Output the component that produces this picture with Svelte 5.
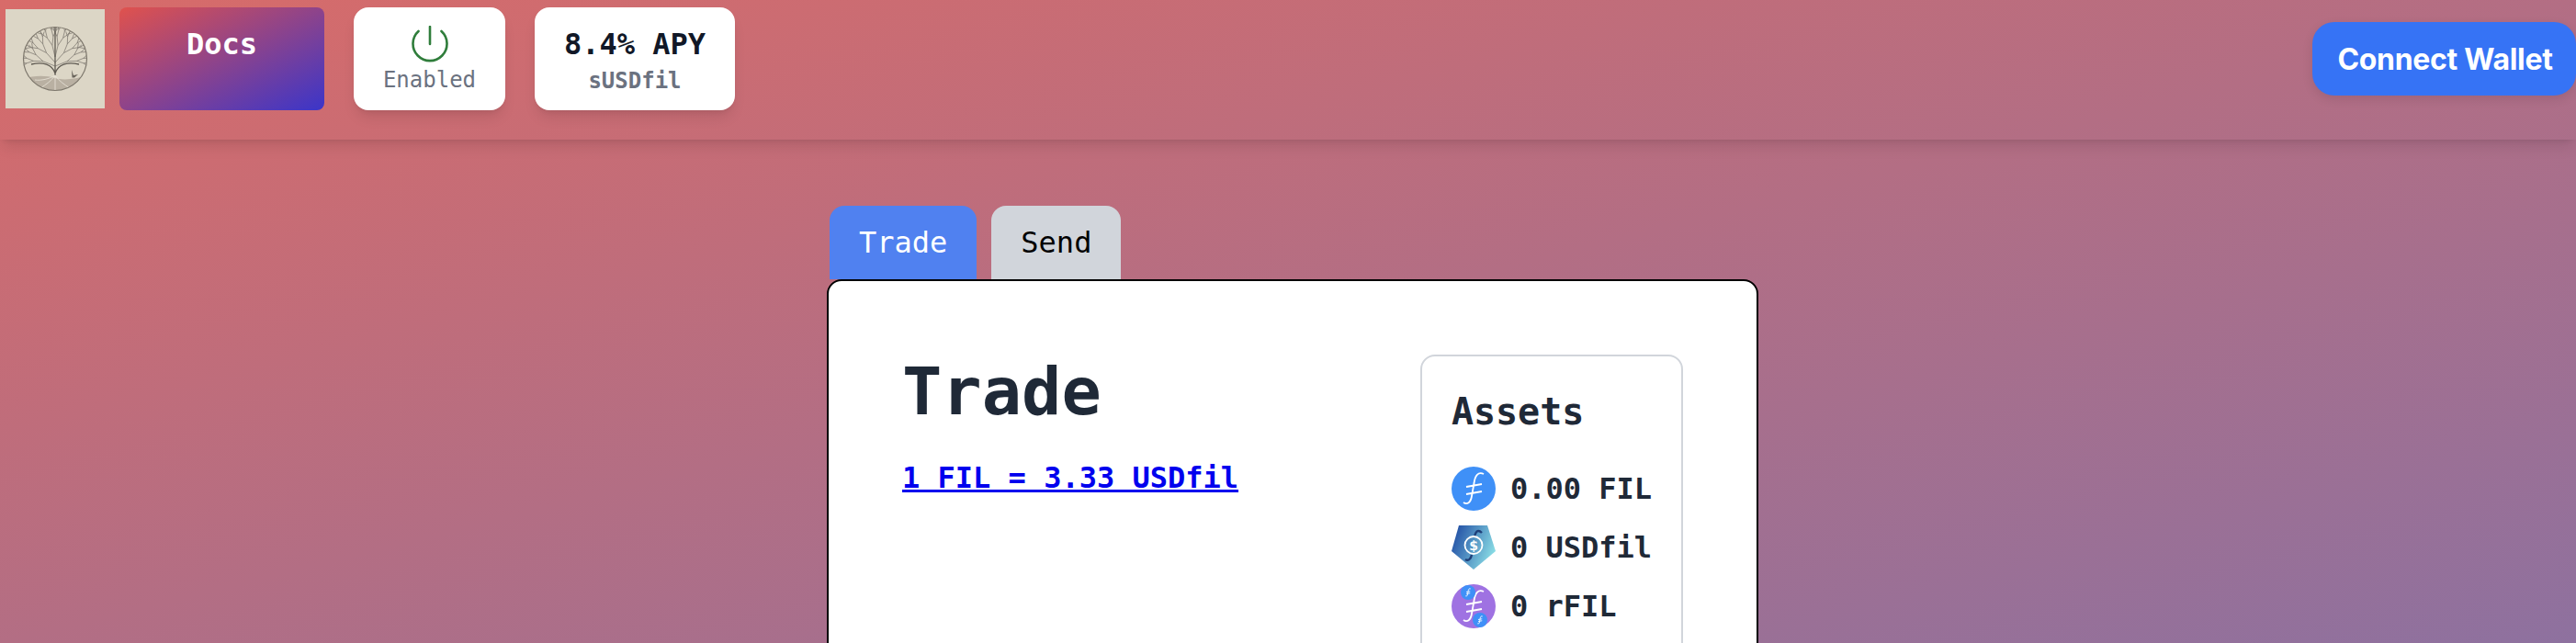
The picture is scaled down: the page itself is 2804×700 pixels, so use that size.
<script>
	const assets = [
		{ id: 'fil', amount: '0.00 FIL' },
		{ id: 'usd', amount: '0 USDfil' },
		{ id: 'rfil', amount: '0 rFIL' }
	];

	// the filecoin "f" with its two crossing bars, in a 48 box
	const filGlyph = 'M35 8C29 5 25.5 10 24.5 18L22 32C21 39 17 42 13 39M16 22L33 19M16 30L33 27';

	// tree branches for the logo: x, y, angle, length, depth
	function branches(x, y, a, len, depth) {
		const rad = (a * Math.PI) / 180;
		const nx = x + Math.sin(rad) * len;
		const ny = y - Math.cos(rad) * len;
		let d = `M${x.toFixed(1)} ${y.toFixed(1)}L${nx.toFixed(1)} ${ny.toFixed(1)}`;
		if (depth > 0) {
			d += branches(nx, ny, a - 20, len * 0.75, depth - 1);
			d += branches(nx, ny, a + 20, len * 0.75, depth - 1);
		}
		return d;
	}
	const forks = [
		[54, 52, -14, 13],
		[54, 52, 14, 13],
		[54, 58, -42, 14],
		[54, 58, 42, 14],
		[54, 62, -68, 14],
		[54, 62, 68, 14]
	];
	const tree = forks.map(([x, y, a, l]) => branches(x, y, a, l, 3)).join('');
</script>

<div class="page">
	<header>
		<div class="logo">
			<svg width="108" height="108" viewBox="0 0 108 108">
				<defs>
					<clipPath id="ring"><circle cx="54" cy="54" r="34.5" /></clipPath>
				</defs>
				<g clip-path="url(#ring)">
					<path d="M20 76C30 72 44 72 54 75C64 78 76 76 90 72V92H20Z" fill="#b9b0a2" />
					<path d={tree} fill="none" stroke="#77716a" stroke-width="0.7" />
					<path d="M54 18V72M54 70C51 60 41 57 28 60M54 70C57 60 67 57 80 60" fill="none" stroke="#5f5a52" stroke-width="1.3" />
					<path d="M54 72C50 78 44 82 38 86M54 72C58 78 64 82 70 86M54 72V90M54 72C48 76 38 78 32 77" fill="none" stroke="#ebe6da" stroke-width="0.8" />
				</g>
				<path d="M72 66L74 72L79 71L75 74.5H72.5Z" fill="#6a655c" />
				<circle cx="54" cy="54" r="34.5" fill="none" stroke="#7d776c" stroke-width="1.2" />
			</svg>
		</div>
		<a class="docs" href="#docs">Docs</a>
		<div class="stat">
			<svg class="power" width="40" height="40" viewBox="0 0 40 40">
				<path d="M7.5 6A18.5 18.5 0 1 0 32.5 6M20 1V20" fill="none" stroke="#2f7d3b" stroke-width="2.6" stroke-linecap="round" />
			</svg>
			<span class="sub">Enabled</span>
		</div>
		<div class="stat apy">
			<span class="big">8.4% APY</span>
			<span class="sub bold">sUSDfil</span>
		</div>
		<button class="connect">Connect Wallet</button>
	</header>

	<main>
		<div class="tabs">
			<button class="tab active">Trade</button>
			<button class="tab">Send</button>
		</div>
		<section class="card">
			<div class="left">
				<h1>Trade</h1>
				<a class="rate" href="#rate">1 FIL = 3.33 USDfil</a>
			</div>
			<aside class="assets">
				<h2>Assets</h2>
				{#each assets as asset}
					<div class="asset">
						<svg width="48" height="48" viewBox="0 0 48 48">
							{#if asset.id === 'fil'}
								<circle cx="24" cy="24" r="24" fill="#3f90f7" />
								<path d={filGlyph} fill="none" stroke="#fff" stroke-width="1.8" />
							{:else if asset.id === 'usd'}
								<defs>
									<linearGradient id="usdg" x1="0" y1="0.2" x2="1" y2="0.6">
										<stop offset="0" stop-color="#1f4ba3" />
										<stop offset="1" stop-color="#8bdfe6" />
									</linearGradient>
								</defs>
								<path d="M8 0H39L48 28L24 48L0 28Z" fill="url(#usdg)" />
								<path d="M33 8C28 3 26 8 25 12M22 32C21 37 18 39 15 37" fill="none" stroke="#1f3f78" stroke-width="2.4" />
								<circle cx="24" cy="21.5" r="9.5" fill="none" stroke="#fff" stroke-width="1.8" />
								<text class="dollar" x="24" y="26.5" text-anchor="middle">$</text>
							{:else}
								<circle cx="24" cy="24" r="24" fill="#9f72e2" />
								<path d={filGlyph} fill="none" stroke="#fff" stroke-width="1.8" />
								<circle cx="18" cy="9" r="8" fill="#3f90f7" />
								<path d={filGlyph} transform="translate(12 3) scale(0.25)" fill="none" stroke="#fff" stroke-width="3.4" />
								<circle cx="31" cy="39" r="8" fill="#3f90f7" />
								<path d={filGlyph} transform="translate(25 33) scale(0.25)" fill="none" stroke="#fff" stroke-width="3.4" />
							{/if}
						</svg>
						<span>{asset.amount}</span>
					</div>
				{/each}
			</aside>
		</section>
	</main>
</div>

<style>
	:global(body) {
		margin: 0;
	}

	.page {
		width: 2804px;
		height: 700px;
		overflow: hidden;
		background: linear-gradient(to bottom right, #d86b69, #8e719f);
		font-family: 'DejaVu Sans Mono', monospace;
	}

	header {
		height: 152px;
		display: flex;
		align-items: flex-start;
		padding: 8px 0 0 6px;
		box-sizing: border-box;
		box-shadow: 0 10px 15px -3px rgba(0, 0, 0, 0.1), 0 4px 6px -4px rgba(0, 0, 0, 0.1);
	}

	.logo {
		width: 108px;
		height: 108px;
		margin-top: 2px;
		background: #dcd6c6;
	}

	.logo svg {
		display: block;
	}

	.docs {
		width: 223px;
		height: 112px;
		margin-left: 16px;
		padding-top: 16px;
		box-sizing: border-box;
		border-radius: 8px;
		background: linear-gradient(to bottom right, #e0524d, #3b35c9);
		color: #fff;
		font-size: 32px;
		font-weight: bold;
		line-height: 48px;
		text-align: center;
		text-decoration: none;
	}

	.stat {
		width: 165px;
		height: 112px;
		margin-left: 32px;
		box-sizing: border-box;
		display: flex;
		flex-direction: column;
		align-items: center;
		padding-top: 20px;
		background: #fff;
		border-radius: 16px;
		box-shadow: 0 10px 15px -3px rgba(0, 0, 0, 0.1), 0 4px 6px -4px rgba(0, 0, 0, 0.1);
	}

	.apy {
		width: 218px;
		padding-top: 16px;
	}

	.big {
		font-size: 32px;
		font-weight: bold;
		line-height: 48px;
		color: #111827;
	}

	.sub {
		font-size: 24px;
		line-height: 32px;
		color: #6b7280;
	}

	.bold {
		font-weight: bold;
	}

	.power {
		margin-bottom: 3px;
	}

	.connect {
		margin: 16px 0 0 auto;
		width: 287px;
		height: 80px;
		padding: 0 0 0 2px;
		border: none;
		border-radius: 24px;
		background: #3673f5;
		color: #fff;
		font-family: Inter, sans-serif;
		font-size: 32px;
		font-weight: 700;
		letter-spacing: -0.3px;
		box-shadow: 0 4px 12px rgba(0, 0, 0, 0.1);
	}

	main {
		width: 1014px;
		margin: 72px 0 0 900px;
	}

	.tabs {
		display: flex;
		gap: 16px;
		padding-left: 3px;
	}

	.tab {
		height: 80px;
		padding: 0 32px;
		border: none;
		border-radius: 16px 16px 0 0;
		background: #d1d5db;
		color: #000;
		font-family: inherit;
		font-size: 32px;
	}

	.active {
		background: #5081f0;
		color: #fff;
	}

	.card {
		display: flex;
		justify-content: space-between;
		align-items: flex-start;
		padding: 80px;
		background: #fff;
		border: 2px solid #000;
		border-radius: 16px;
		height: 600px;
	}

	h1 {
		margin: 0 0 30px;
		font-size: 72px;
		line-height: 80px;
		font-weight: bold;
		color: #1f2937;
	}

	.rate {
		font-size: 32px;
		font-weight: bold;
		line-height: 48px;
		color: #0000ee;
	}

	.assets {
		padding: 32px;
		border: 2px solid #d1d5db;
		border-radius: 16px;
		height: 400px;
		color: #1f2937;
	}

	h2 {
		margin: 0 0 32px;
		font-size: 40px;
		line-height: 56px;
		font-weight: bold;
	}

	.asset {
		display: flex;
		align-items: center;
		gap: 16px;
		height: 48px;
		margin-bottom: 16px;
		font-size: 32px;
		font-weight: bold;
	}

	.dollar {
		font-family: 'DejaVu Sans', sans-serif;
		font-size: 14px;
		font-weight: bold;
		fill: #fff;
	}
</style>
